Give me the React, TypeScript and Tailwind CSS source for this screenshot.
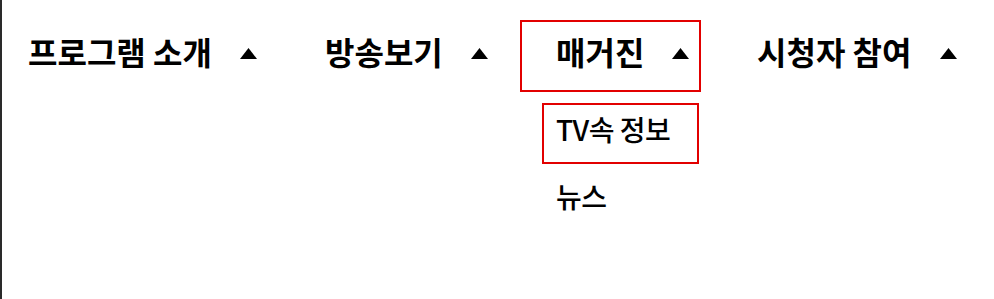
import React from "react";

const Tri = () => (
  <svg width="17" height="11" viewBox="0 0 17 11" className="shrink-0 -mt-[5px]">
    <polygon points="8.5,0 17,11 0,11" fill="#000" />
  </svg>
);

const font = { fontFamily: '"Noto Sans CJK KR", "Noto Sans", sans-serif' };

export default function App() {
  return (
    <div
      className="h-[299px] w-[994px] bg-white border-l-2 border-[#2a2a2a] text-black"
      style={font}
    >
      <nav className="flex items-start gap-[20px] pt-[20px]">
        <div className="flex h-[72px] w-[267px] items-center justify-between pl-[26px] pr-[12px]">
          <span className="-mt-[11px] text-[32px] font-bold leading-none">프로그램 소개</span>
          <Tri />
        </div>
        <div className="flex h-[72px] w-[211px] items-center justify-between pl-[36px] pr-[12px]">
          <span className="-mt-[11px] text-[32px] font-bold leading-none">방송보기</span>
          <Tri />
        </div>
        <div className="relative flex h-[72px] w-[181px] items-center justify-between border-2 border-[#e20000] pl-[34px] pr-[10px]">
          <span className="-mt-[11px] text-[32px] font-bold leading-none">매거진</span>
          <Tri />
          <ul className="absolute left-[20px] top-[81px] w-[157px]">
            <li className="flex h-[61px] items-center border-2 border-[#e20000] pl-[12px]">
              <span className="-mt-[9px] text-[28px] font-medium leading-none tracking-[-0.5px]">TV속 정보</span>
            </li>
            <li className="mt-[4px] flex h-[61px] items-center pl-[14px]">
              <span className="-mt-[5px] text-[28px] font-medium leading-none tracking-[-0.5px]">뉴스</span>
            </li>
          </ul>
        </div>
        <div className="flex h-[72px] w-[248px] items-center justify-between pl-[36px] pr-[12px]">
          <span className="-mt-[11px] text-[32px] font-bold leading-none">시청자 참여</span>
          <Tri />
        </div>
      </nav>
    </div>
  );
}
